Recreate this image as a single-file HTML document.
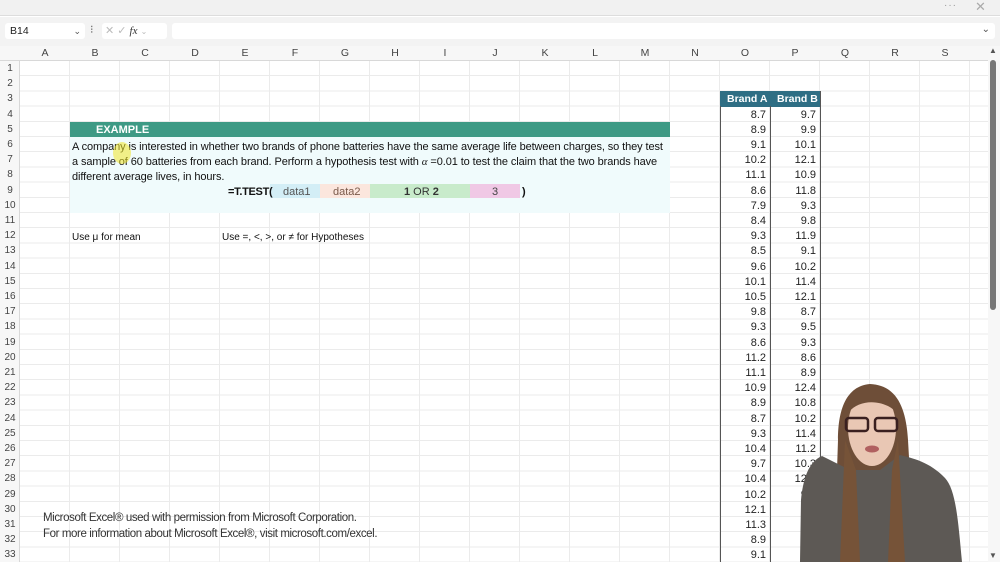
<!DOCTYPE html>
<html><head><meta charset="utf-8"><style>
*{margin:0;padding:0;box-sizing:border-box}
body{width:1000px;height:562px;overflow:hidden;background:#fff;font-family:"Liberation Sans",Arial,sans-serif;position:relative}
.a{position:absolute;white-space:nowrap}
.grid{position:absolute;left:20px;top:61px;width:968px;height:501px;
background-image:repeating-linear-gradient(to right,transparent 0,transparent 49px,#ebebeb 49px,#ebebeb 50px),repeating-linear-gradient(to bottom,transparent 0,transparent 14.2px,#ebebeb 14.2px,#ebebeb 15.2px)}
.rh{position:absolute;left:0;width:20px;font-size:10px;color:#444;text-align:center;height:15.2px;line-height:15.2px}
.ch{position:absolute;top:46px;width:50px;font-size:10.5px;color:#444;text-align:center;line-height:14px}
.t{font-size:11px;color:#111;line-height:15.2px}
.n{position:absolute;width:46px;text-align:right;font-size:11px;color:#222;line-height:15.2px}
</style></head><body>
<div class="a" style="left:0;top:0;width:1000px;height:16px;background:#f1f1f1;border-bottom:1px solid #ddd"></div>
<div class="a" style="left:944px;top:0;font-size:10px;color:#999;letter-spacing:1px">···</div>
<div class="a" style="left:975px;top:-1px;font-size:13px;color:#aaa">✕</div>
<div class="a" style="left:0;top:17px;width:1000px;height:29px;background:#f3f3f3"></div>
<div class="a" style="left:5px;top:23px;width:80px;height:16px;background:#fff;border-radius:3px;font-size:10.5px;line-height:16px;padding-left:5px;color:#222">B14<span style="position:absolute;right:4px;color:#555;font-size:9px">⌄</span></div>
<div class="a" style="left:90px;top:23px;font-size:11px;color:#666">⁝</div>
<div class="a" style="left:102px;top:23px;width:65px;height:16px;background:#fff;border-radius:3px;font-size:11px;line-height:16px;color:#bbb;padding-left:3px">✕ ✓ <i style="color:#333;font-family:'Liberation Serif',serif">fx</i> <span style="font-size:8px">⌄</span></div>
<div class="a" style="left:172px;top:23px;width:823px;height:16px;background:#fff;border-radius:3px"><span style="position:absolute;right:5px;top:1px;font-size:10px;color:#555">⌄</span></div>
<div class="a" style="left:0;top:46px;width:1000px;height:15px;background:#f7f7f7;border-bottom:1px solid #d8d8d8"></div>
<div class="a" style="left:0;top:61px;width:20px;height:501px;background:#f7f7f7;border-right:1px solid #d8d8d8"></div>
<div class="grid"></div>
<div class="a" style="left:988px;top:46px;width:12px;height:516px;background:#f7f7f7"></div>
<div class="a" style="left:990px;top:60px;width:6px;height:250px;background:#777;border-radius:3px"></div>
<div class="a" style="left:989px;top:46px;font-size:8px;color:#555">▲</div>
<div class="a" style="left:989px;top:551px;font-size:8px;color:#555">▼</div>
<div id="hdr"></div>
<script>
var s='',L='ABCDEFGHIJKLMNOPQRS';
for(var i=0;i<19;i++)s+='<div class="ch" style="left:'+(20+i*50)+'px">'+L[i]+'</div>';
for(var r=1;r<=33;r++)s+='<div class="rh" style="top:'+(61+(r-1)*15.2)+'px">'+r+'</div>';
var A=[8.7,8.9,9.1,10.2,11.1,8.6,7.9,8.4,9.3,8.5,9.6,10.1,10.5,9.8,9.3,8.6,11.2,11.1,10.9,8.9,8.7,9.3,10.4,9.7,10.4,10.2,12.1,11.3,8.9,9.1];
var B=[9.7,9.9,10.1,12.1,10.9,11.8,9.3,9.8,11.9,9.1,10.2,11.4,12.1,8.7,9.5,9.3,8.6,8.9,12.4,10.8,10.2,11.4,11.2,10.3,12.0,9.4,9.6,9.2,'',''];
for(var k=0;k<30;k++){var y=62+(k+3)*15.2;
s+='<div class="n" style="left:720px;top:'+y+'px">'+A[k].toFixed(1)+'</div>';
s+='<div class="n" style="left:770px;top:'+y+'px">'+(B[k]===''?'':B[k].toFixed(1))+'</div>';}
document.getElementById('hdr').innerHTML=s;
</script>
<div class="a" style="left:720px;top:91.4px;width:101px;height:15.2px;background:#2e6e84;color:#fff;font-weight:bold;font-size:10.5px;line-height:17px"><span style="position:absolute;left:7px">Brand A</span><span style="position:absolute;left:57px">Brand B</span></div>
<div class="a" style="left:720px;top:106px;width:1px;height:456px;background:#555"></div>
<div class="a" style="left:770px;top:106px;width:1px;height:456px;background:#555"></div>
<div class="a" style="left:820px;top:91px;width:1px;height:471px;background:#555"></div>

<div class="a" style="left:70px;top:122px;width:600px;height:15px;background:#3e9a85"></div>
<div class="a" style="left:96px;top:123px;color:#fff;font-weight:bold;font-size:11px;line-height:15px">EXAMPLE</div>
<div class="a" style="left:70px;top:137px;width:600px;height:76px;background:#f0fbfc"></div>
<div class="a t" style="left:72px;top:140px;letter-spacing:-0.1px">A company is interested in whether two brands of phone batteries have the same average life between charges, so they test</div>
<div class="a t" style="left:72px;top:155px;letter-spacing:-0.1px">a sample of 60 batteries from each brand. Perform a hypothesis test with <i style="font-family:'Liberation Serif',serif">α</i> =0.01 to test the claim that the two brands have</div>
<div class="a t" style="left:72px;top:170px;letter-spacing:-0.1px">different average lives, in hours.</div>
<div class="a" style="left:113px;top:142px;width:18px;height:22px;border-radius:50%;background:rgba(240,230,40,.55)"></div>
<div class="a" style="left:270px;top:184px;width:50px;height:14px;background:#d3eef6"></div>
<div class="a" style="left:320px;top:184px;width:50px;height:14px;background:#fbe6dd"></div>
<div class="a" style="left:370px;top:184px;width:100px;height:14px;background:#c8ebcb"></div>
<div class="a" style="left:470px;top:184px;width:50px;height:14px;background:#f0c8e5"></div>
<div class="a t" style="left:228px;top:184.5px;font-weight:bold;letter-spacing:-0.3px">=T.TEST(</div>
<div class="a t" style="left:283px;top:184.5px;color:#555">data1</div>
<div class="a t" style="left:333px;top:184.5px;color:#7a5a4a">data2</div>
<div class="a t" style="left:404px;top:184.5px;color:#333"><b>1</b> OR <b>2</b></div>
<div class="a t" style="left:492px;top:184.5px;color:#444">3</div>
<div class="a t" style="left:522px;top:184.5px;font-weight:bold">)</div>
<div class="a t" style="left:72px;top:230.4px;font-size:10px;letter-spacing:0px">Use μ for mean</div>
<div class="a t" style="left:222px;top:230.4px;font-size:10px;letter-spacing:0px">Use =, &lt;, &gt;, or ≠ for Hypotheses</div>
<div class="a" style="left:43px;top:512px;font-size:11.5px;color:#333;letter-spacing:-0.4px">Microsoft Excel® used with permission from Microsoft Corporation.</div>
<div class="a" style="left:43px;top:528px;font-size:11.5px;color:#333;letter-spacing:-0.4px">For more information about Microsoft Excel®, visit microsoft.com/excel.</div>

<svg class="a" style="left:0;top:0" width="1000" height="562">
<path d="M870 384 C846 386 838 410 838 440 L834 562 L915 562 L908 440 C906 405 895 385 870 384Z" fill="#6e4e38"/>
<path d="M822 456 C808 462 803 480 801 500 L800 562 L962 562 C958 520 956 490 945 478 C930 462 912 458 900 455 L880 470 L850 470Z" fill="#5d5955"/>
<path d="M845 440 L840 562 L860 562 L856 470Z M898 440 L905 562 L888 562 L892 470Z" fill="#765338"/>
<ellipse cx="872" cy="428" rx="24" ry="38" fill="#e9c7b4"/>
<path d="M850 395 C860 386 885 386 895 398 L896 412 C885 400 860 398 849 412Z" fill="#6e4e38"/>
<rect x="846" y="418" width="22" height="13" rx="3" fill="none" stroke="#3a2020" stroke-width="2.5"/>
<rect x="875" y="418" width="22" height="13" rx="3" fill="none" stroke="#3a2020" stroke-width="2.5"/>
<ellipse cx="872" cy="449" rx="7" ry="3.5" fill="#b06060"/>
</svg>
</body></html>
